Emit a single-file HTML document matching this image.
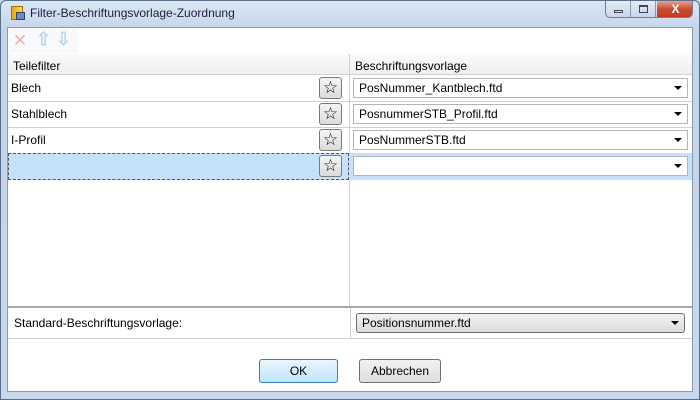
<!DOCTYPE html>
<html><head><style>
*{margin:0;padding:0;box-sizing:border-box}
body{width:700px;height:400px;overflow:hidden;font-family:"Liberation Sans",sans-serif;font-size:12px;color:#000;background:#c4d6ea;position:relative}
.a{position:absolute}
.frame{left:0;top:0;width:700px;height:400px;border:1px solid #5a6f8a;border-radius:6px 6px 0 0;background:linear-gradient(#dbe6f4,#c3d5ea 30px,#c7d8ec)}
.client{left:7px;top:27px;width:686px;height:365px;background:#fff;border:1px solid #8a9bb0}
.star{width:23px;height:22px;border:1px solid #7a7a7a;border-radius:3px;background:linear-gradient(#f4f4f4,#dcdcdc);text-align:center;font-size:17px;line-height:20px;color:#000;font-family:"DejaVu Sans",sans-serif}
.combo{height:20px;border:1px solid #b5b5b5;background:#fff;padding-left:5px;line-height:18px}
.arr{position:absolute;right:5px;top:7px;width:0;height:0;border-left:4px solid transparent;border-right:4px solid transparent;border-top:4px solid #000}
.hl{height:1px;background:#d0d0d0}
.btn{height:24px;border:1px solid #707070;border-radius:3px;background:linear-gradient(#f2f2f2,#dddddd);text-align:center;line-height:22px}
</style></head><body>
<div class="a frame"></div>
<div class="a" style="left:11px;top:6px;width:12px;height:14px;background:linear-gradient(90deg,#e8a810,#f8d850);border:1px solid #a07010"></div>
<div class="a" style="left:16px;top:12px;width:9px;height:8px;background:#6a8ad0;border:1px solid #345"></div>
<div class="a" style="left:30px;top:6px;font-size:12px;color:#1e1e3c">Filter-Beschriftungsvorlage-Zuordnung</div>
<div class="a" style="left:605px;top:1px;width:88px;height:17px;border:1px solid #6d7f99;border-top:none;border-radius:0 0 5px 5px;background:linear-gradient(#e4ecf6,#c8d6e8);overflow:hidden">
<div class="a" style="left:0;top:0;width:25px;height:17px;border-right:1px solid #8899b0"><div class="a" style="left:8px;top:9px;width:9px;height:3px;border:1px solid #445"></div></div>
<div class="a" style="left:26px;top:0;width:24px;height:17px;border-right:1px solid #8899b0"><div class="a" style="left:7px;top:4px;width:9px;height:8px;border:1px solid #445;border-top-width:2px"></div></div>
<div class="a" style="left:51px;top:0;width:37px;height:17px;background:linear-gradient(#e8a090,#c84a30 50%,#c03820);color:#fff;font-weight:bold;text-align:center;line-height:16px;font-size:12px">X</div>
</div>
<div class="a client"></div>
<div class="a" style="left:10px;top:29px;width:68px;height:24px;background:#f7f9fb"></div>
<div class="a" style="left:13px;top:31px;color:#f4b0b0;font-size:17px">✕</div>
<div class="a" style="left:36px;top:29px;color:#b8d8f0;font-size:18px;font-weight:bold">⇧</div>
<div class="a" style="left:56px;top:29px;color:#b8d8f0;font-size:18px;font-weight:bold">⇩</div>
<div class="a" style="left:8px;top:54px;width:684px;height:21px;background:linear-gradient(#fafafa,#f0f0f0);border-bottom:1px solid #d0d0d0"></div>
<div class="a" style="left:349px;top:54px;width:1px;height:252px;background:#d0d0d0"></div>
<div class="a" style="left:13px;top:59px">Teilefilter</div>
<div class="a" style="left:355px;top:59px">Beschriftungsvorlage</div>
<div class="a hl" style="left:8px;top:101px;width:684px"></div>
<div class="a hl" style="left:8px;top:127px;width:684px"></div>
<div class="a hl" style="left:8px;top:153px;width:684px"></div>
<div class="a" style="left:8px;top:153px;width:341px;height:27px;background:#c6e1fc;border:1px dashed #555"></div>
<div class="a" style="left:349px;top:153px;width:343px;height:27px;background:#c6e1fc"></div>
<div class="a" style="left:11px;top:81px">Blech</div>
<div class="a" style="left:11px;top:107px">Stahlblech</div>
<div class="a" style="left:11px;top:133px">I-Profil</div>
<div class="a star" style="left:319px;top:77px">☆</div>
<div class="a star" style="left:319px;top:103px">☆</div>
<div class="a star" style="left:319px;top:129px">☆</div>
<div class="a star" style="left:319px;top:155px">☆</div>
<div class="a combo" style="left:353px;top:78px;width:335px">PosNummer_Kantblech.ftd<div class="arr"></div></div>
<div class="a combo" style="left:353px;top:104px;width:335px">PosnummerSTB_Profil.ftd<div class="arr"></div></div>
<div class="a combo" style="left:353px;top:130px;width:335px">PosNummerSTB.ftd<div class="arr"></div></div>
<div class="a combo" style="left:353px;top:156px;width:335px"><div class="arr"></div></div>
<div class="a" style="left:8px;top:306px;width:684px;height:2px;background:#a8a8a8"></div>
<div class="a hl" style="left:8px;top:338px;width:684px"></div>
<div class="a" style="left:350px;top:308px;width:1px;height:30px;background:#d0d0d0"></div>
<div class="a" style="left:14px;top:316px">Standard-Beschriftungsvorlage:</div>
<div class="a combo" style="left:356px;top:313px;width:329px;border-color:#707070;border-radius:3px;background:linear-gradient(#f2f2f2,#dcdcdc)">Positionsnummer.ftd<div class="arr"></div></div>
<div class="a btn" style="left:259px;top:359px;width:79px;border-color:#3c7fb1;background:linear-gradient(#eaf6fd,#bee6fd)">OK</div>
<div class="a btn" style="left:359px;top:359px;width:82px">Abbrechen</div>
</body></html>
